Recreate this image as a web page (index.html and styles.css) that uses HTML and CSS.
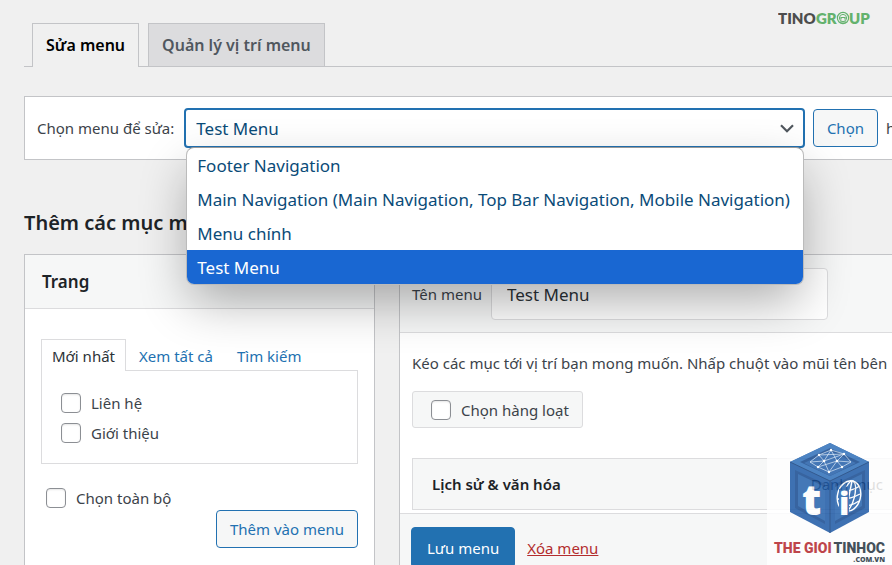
FILE: index.html
```
<!DOCTYPE html>
<html lang="vi">

<head>
    <meta charset="UTF-8">
    <meta name="viewport" content="width=device-width, initial-scale=1.0">
    <title>Menu</title>
    <link rel="stylesheet" href="styles.css">
</head>

<body>

    <main class="wrap">
        <nav class="nav-tabs">
            <a href="#" class="nav-tab active">Sửa menu</a>
            <a href="#" class="nav-tab">Quản lý vị trí menu</a>
        </nav>

        <form class="manage-menus">
            <label for="menuSelect">Chọn menu để sửa:</label>
            <div class="select-box">
                <select id="menuSelect">
                    <option>Test Menu</option>
                </select>
                <svg class="arrow" viewBox="0 0 14 9" aria-hidden="true">
                    <path d="M1 1.2 L7 7.2 L13 1.2" fill="none" stroke="#50575e" stroke-width="2.2" />
                </svg>
                <ul class="options">
                    <li>Footer Navigation</li>
                    <li>Main Navigation (Main Navigation, Top Bar Navigation, Mobile Navigation)</li>
                    <li>Menu chính</li>
                    <li class="selected">Test Menu</li>
                </ul>
            </div>
            <button type="button" class="button">Chọn</button>
            <span class="or">h</span>
        </form>

        <div class="columns">
            <section class="column">
                <h2>Thêm các mục menu</h2>
                <div class="panel">
                    <h3 class="panel-title">Trang</h3>
                    <div class="panel-body">
                        <div class="page-tabs">
                            <a href="#" class="page-tab active">Mới nhất</a>
                            <a href="#" class="page-tab">Xem tất cả</a>
                            <a href="#" class="page-tab">Tìm kiếm</a>
                        </div>
                        <div class="page-list">
                            <label class="check"><input type="checkbox">Liên hệ</label>
                            <label class="check"><input type="checkbox">Giới thiệu</label>
                        </div>
                        <label class="check select-all"><input type="checkbox">Chọn toàn bộ</label>
                        <div class="actions">
                            <button type="button" class="button">Thêm vào menu</button>
                        </div>
                    </div>
                </div>
            </section>

            <section class="column structure">
                <div class="panel edit-panel">
                    <div class="menu-name">
                        <label for="menuName">Tên menu</label>
                        <input type="text" id="menuName" value="Test Menu">
                    </div>
                    <div class="menu-body">
                        <p>Kéo các mục tới vị trí bạn mong muốn. Nhấp chuột vào mũi tên bên</p>
                        <label class="check bulk"><input type="checkbox">Chọn hàng loạt</label>
                        <div class="menu-item">
                            <strong>Lịch sử &amp; văn hóa</strong>
                            <span class="item-type">Danh mục</span>
                        </div>
                    </div>
                    <div class="menu-footer">
                        <button type="button" class="button primary">Lưu menu</button>
                        <a href="#" class="delete">Xóa menu</a>
                    </div>
                </div>
            </section>
        </div>
    </main>

    <svg class="tino-logo" viewBox="0 0 94 20" role="img" aria-label="TINOGROUP">
        <text x="0" y="15" fill="#4d4d4d">TINO</text>
        <text x="38" y="15" fill="#63b26d">GR</text>
        <g fill="none" stroke="#63b26d">
            <circle cx="65" cy="9" r="5.6" stroke-width="1.2" />
            <circle cx="65" cy="9" r="3.6" stroke-width="1" />
            <path d="M63 10.500 v-2 h4 v2 M62 13 h6" stroke-width="1.2" />
        </g>
        <text x="71" y="15" fill="#63b26d">UP</text>
    </svg>

    <div class="watermark">
        <svg viewBox="0 0 126 126" role="img" aria-label="THE GIOI TINHOC .COM.VN">
            <path fill="#1f5aa6" d="M63 4 L102 23 V73 L63 94 L23 73 V23 Z" />
            <path fill="#2f6fb9" d="M63 4 L102 23 L63 42 L23 23 Z" />
            <path fill="#164a8f" d="M63 9 L93 23 L63 37 L33 23 Z" />
            <path fill="#2560aa" d="M63 12 L89 24 L63 37 L37 24 Z" />
            <path fill="#174b91" d="M28 31 L58 45 V85 L28 69 Z M98 31 L68 45 V85 L98 69 Z" />
            <path fill="#2562ad" d="M31 35 L58 48 V82 L31 67 Z M95 35 L68 48 V82 L95 67 Z" />
            <path fill="none" stroke="#123f7d" d="M63 42 V94 M23 23 L63 42 L102 23" />
            <g fill="none" stroke="#dbe9f8" stroke-width=".7">
                <path d="M43 23 L52 16 L64 11 L77 15 L84 23 L75 28 L62 33 L51 28 Z" />
                <path d="M43 23 L57 22 L64 11 L70 22 L84 23 M52 16 L57 22 L51 28 L70 22 L77 15 L57 22 L62 33 L70 22 L75 28 M52 16 L77 15" />
            </g>
            <g fill="#fff">
                <circle cx="52" cy="16" r="1.2" />
                <circle cx="64" cy="11" r="1.2" />
                <circle cx="77" cy="15" r="1.2" />
                <circle cx="57" cy="22" r="1.3" />
                <circle cx="70" cy="22" r="1.3" />
                <circle cx="51" cy="28" r="1.2" />
                <circle cx="75" cy="28" r="1.2" />
                <circle cx="62" cy="33" r="1.2" />
            </g>
            <g fill="none" stroke="#fff" stroke-width="1.4">
                <ellipse cx="82" cy="57" rx="11.500" ry="15.500" transform="rotate(14 82 57)" />
                <ellipse cx="82" cy="57" rx="5.500" ry="15.500" transform="rotate(14 82 57)" />
                <path d="M85 42 L79 72 M73 52 Q83 53 93 47 M71 60 Q82 61 93 55 M73 67 Q83 68 92 62" />
            </g>
            <!-- dark gap so the letter stands clear of the globe -->
            <path fill="#2562ad" d="M72 50 L82 47 V74 L72 78 Z" />
            <text class="cube-letter" x="35" y="76">t</text>
            <text class="cube-letter cube-i" x="72" y="76">i</text>
            <text class="brand" x="7" y="114" fill="#b5262e">THE GIOI</text>
            <text class="brand" x="118" y="114" text-anchor="end" fill="#26343f">TINHOC</text>
            <text class="domain" x="118" y="123" text-anchor="end">.COM.VN</text>
        </svg>
    </div>

</body>

</html>
```
FILE: styles.css
```
* {
    box-sizing: border-box;
}

body {
    font-family: 'Noto Sans', 'Open Sans', sans-serif;
    margin: 0;
    background-color: #f0f0f0;
    font-size: 15px;
    line-height: 20px;
    color: #3c434a;
    height: 100vh;
    position: relative;
    overflow: hidden;
}

a {
    color: #2271b1;
    text-decoration: none;
}

.wrap {
    padding: 23px 0 0 24px;
}

.nav-tabs {
    display: flex;
    gap: 9px;
    padding-left: 8px;
    border-bottom: 1px solid #c3c4c7;
}

.nav-tab {
    padding: 12px 13px 11px;
    border: 1px solid #c3c4c7;
    border-bottom: none;
    background-color: #dcdcde;
    color: #50575e;
    font-size: 16px;
    line-height: 19px;
    font-weight: 600;
    white-space: nowrap;
}

.nav-tab.active {
    background-color: #f0f0f0;
    color: #000;
    margin-bottom: -1px;
}

.manage-menus {
    display: flex;
    align-items: center;
    gap: 8px;
    height: 64px;
    margin: 29px 0 0;
    padding-left: 12px;
    background-color: #fff;
    border: 1px solid #c3c4c7;
    border-right: none;
    white-space: nowrap;
}

.manage-menus label {
    padding-right: 2px;
}

.select-box {
    flex: 1;
    position: relative;
}

.select-box select {
    display: block;
    width: 100%;
    height: 40px;
    padding: 0 10px;
    appearance: none;
    background-color: #fff;
    border: 2px solid #2271b1;
    border-radius: 4px;
    color: #0a4b78;
    font-family: inherit;
    font-size: 17px;
}

.arrow {
    position: absolute;
    top: 16px;
    right: 11px;
    width: 14px;
    height: 9px;
}

.options {
    position: absolute;
    top: 39px;
    left: 2px;
    right: 1px;
    z-index: 2;
    margin: 0;
    padding: 0;
    list-style: none;
    background-color: #fff;
    border: 1px solid #bbb;
    border-top-color: #999;
    border-radius: 8px;
    box-shadow: 0 20px 50px -4px rgba(0, 0, 0, 0.32);
    overflow: hidden;
    color: #0a4b78;
    font-size: 17px;
}

.options li {
    height: 34px;
    padding: 1px 10px 0;
    line-height: 33px;
    white-space: nowrap;
}

.options .selected {
    background-color: #1967d2;
    color: #fff;
}

.button {
    height: 38px;
    padding: 0 13px;
    background-color: #f6f7f7;
    border: 1px solid #2271b1;
    border-radius: 4px;
    color: #2271b1;
    font-family: inherit;
    font-size: 15px;
    white-space: nowrap;
}

.button.primary {
    height: 41px;
    padding: 0 15px;
    background-color: #2271b1;
    color: #fff;
}

.or {
    width: 6px;
}

.columns {
    display: grid;
    grid-template-columns: 351px 1fr;
    gap: 24px;
    margin-top: 48px;
}

h2 {
    margin: 0;
    color: #1d2327;
    font-size: 20px;
    line-height: 30px;
    font-weight: 600;
}

.panel {
    margin-top: 16px;
    background-color: #fff;
    border: 1px solid #c3c4c7;
}

.panel-title {
    margin: 0;
    padding: 0 17px;
    border-bottom: 1px solid #dcdcde;
    background-color: #f6f7f7;
    color: #1d2327;
    font-size: 17px;
    line-height: 53px;
    font-weight: 600;
}

.panel-body {
    padding: 30px 16px 24px;
}

.page-tabs {
    display: flex;
    gap: 2px;
}

.page-tab {
    padding: 7px 11px 4px;
    white-space: nowrap;
}

.page-tab.active {
    padding: 6px 10px 5px;
    margin-bottom: -1px;
    border: 1px solid #dcdcde;
    border-bottom: none;
    background-color: #fff;
    color: #2c3338;
}

.page-list {
    display: grid;
    gap: 10px;
    padding: 22px 19px 20px;
    border: 1px solid #dcdcde;
}

.check {
    display: flex;
    align-items: center;
    gap: 10px;
}

.check input {
    appearance: none;
    width: 20px;
    height: 20px;
    margin: 0;
    background-color: #fff;
    border: 1px solid #8c8f94;
    border-radius: 4px;
    box-shadow: inset 0 1px 2px rgba(0, 0, 0, 0.1);
}

.select-all {
    margin: 24px 0 0 5px;
}

.actions {
    display: flex;
    justify-content: flex-end;
    margin-top: 2px;
}

.structure {
    padding-top: 30px;
    min-width: 0;
}

.edit-panel {
    border-right: none;
    border-bottom: none;
    white-space: nowrap;
}

.menu-name {
    display: flex;
    align-items: center;
    gap: 9px;
    padding: 13px 12px 12px;
    border-bottom: 1px solid #dcdcde;
    background-color: #f6f7f7;
}

.menu-name input {
    width: 337px;
    height: 52px;
    padding: 0 15px;
    border: 1px solid #dcdcde;
    border-radius: 4px;
    background-color: #fff;
    color: #2c3338;
    font-family: inherit;
    font-size: 17px;
}

.menu-body {
    padding: 20px 0 3px 12px;
}

.menu-body p {
    margin: 0 0 18px;
}

.bulk {
    display: inline-flex;
    height: 37px;
    padding: 0 13px 0 18px;
    border: 1px solid #dcdcde;
    border-radius: 3px;
    background-color: #f6f7f7;
}

.menu-item {
    display: flex;
    align-items: center;
    justify-content: space-between;
    height: 52px;
    margin-top: 30px;
    padding: 0 9px 0 19px;
    border: 1px solid #dcdcde;
    border-right: none;
    background-color: #f6f7f7;
}

.menu-item strong {
    color: #1d2327;
    font-weight: 600;
}

.item-type {
    color: #1d2327;
}

.menu-footer {
    display: flex;
    align-items: center;
    gap: 12px;
    padding: 13px 11px;
    border-top: 1px solid #dcdcde;
    background-color: #f6f7f7;
}

.delete {
    color: #b32d2e;
    text-decoration: underline;
}

.tino-logo {
    position: absolute;
    top: 9px;
    right: 20px;
    width: 94px;
    height: 20px;
    font-family: Lato, sans-serif;
    font-size: 15px;
    line-height: 16px;
    font-weight: 800;
}

.watermark {
    position: absolute;
    right: 0;
    bottom: 0;
    width: 125px;
    height: 126px;
    background: linear-gradient(transparent 17px, #fff 17px);
    opacity: 0.85;
}

.watermark svg {
    display: block;
    width: 126px;
    height: 126px;
}

.cube-letter {
    fill: #fff;
    font-family: 'Open Sans', sans-serif;
    font-size: 42px;
    font-weight: 800;
}

.cube-i {
    font-size: 32px;
}

.brand {
    font-family: Roboto, 'Liberation Sans', sans-serif;
    font-size: 14px;
    font-weight: 900;
}

.domain {
    fill: #26343f;
    font-family: 'Open Sans', sans-serif;
    font-size: 7px;
    font-weight: 800;
}
```
